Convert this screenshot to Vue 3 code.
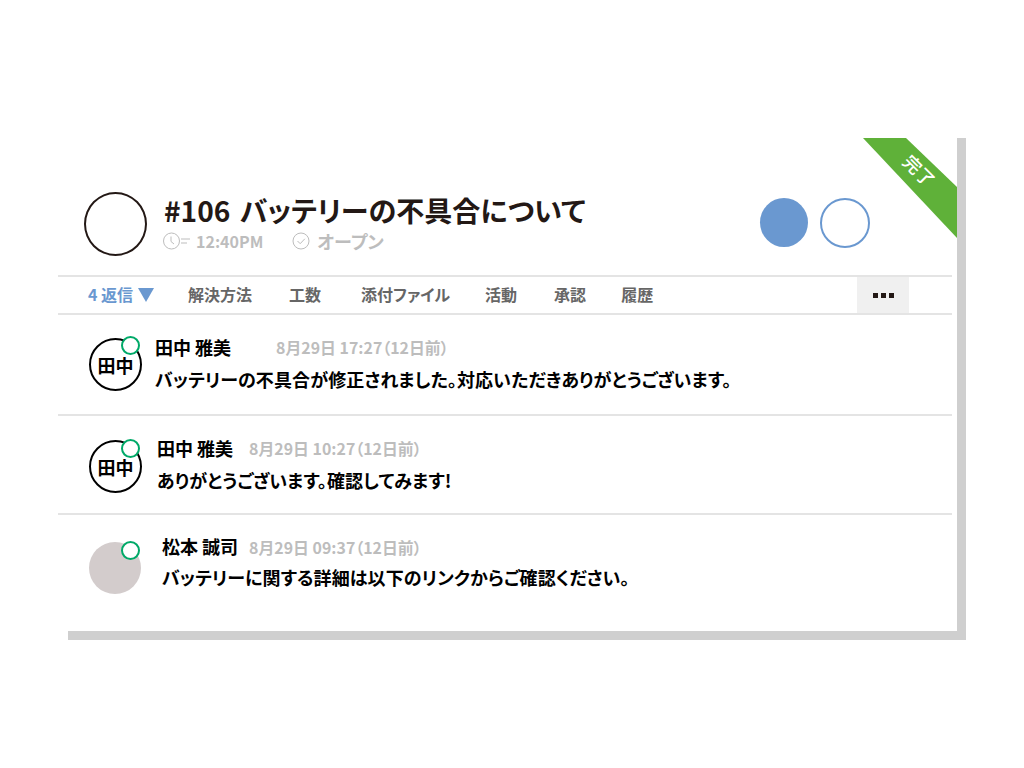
<script setup>
const tabs = [
  { label: '解決方法', cls: 'gap-32' },
  { label: '工数', cls: 'gap-37' },
  { label: '添付ファイル', cls: 'gap-40' },
  { label: '活動', cls: 'gap-35' },
  { label: '承認', cls: 'gap-37' },
  { label: '履歴', cls: 'gap-35' },
];

const replies = [
  {
    name: '田中 雅美',
    date: '8月29日 17:27（12日前）',
    text: 'バッテリーの不具合が修正されました。対応いただきありがとうございます。',
    avatar: '田中',
    cls: 'row-one',
  },
  {
    name: '田中 雅美',
    date: '8月29日 10:27（12日前）',
    text: 'ありがとうございます。確認してみます!',
    avatar: '田中',
    cls: 'row-two',
  },
  {
    name: '松本 誠司',
    date: '8月29日 09:37（12日前）',
    text: 'バッテリーに関する詳細は以下のリンクからご確認ください。',
    avatar: '',
    cls: 'row-three',
  },
];
</script>

<template>
  <div class="page">
    <div class="card">
      <div class="ribbon">
        <svg width="94" height="100" viewBox="0 0 94 100">
          <polygon points="0,0 43,0 94,49 94,100" fill="#5fb139" />
        </svg>
        <span class="ribbon-text">完了</span>
      </div>

      <div class="sheet">
        <header class="head">
          <div class="head-avatar"></div>
          <div class="head-main">
            <h1 class="title">#106 バッテリーの不具合について</h1>
            <div class="meta">
              <svg class="icon-clock" width="28" height="18" viewBox="0 0 28 18" fill="none" stroke="#bdbdbd">
                <circle cx="8.5" cy="9" r="8" />
                <path d="M8 4.5V9.5L11 12" />
                <path d="M18 7H27M18 11H24" />
              </svg>
              <span class="meta-time">12:40PM</span>
              <svg class="icon-check" width="18" height="18" viewBox="0 0 18 18" fill="none" stroke="#bdbdbd">
                <circle cx="9" cy="9" r="8" />
                <path d="M5.5 9L8.2 11.7L12.8 6.8" />
              </svg>
              <span class="meta-state">オープン</span>
            </div>
          </div>
          <div class="members">
            <span class="member filled"></span>
            <span class="member outlined"></span>
          </div>
        </header>

        <nav class="tabs">
          <span class="tab-active">4 返信<i class="caret"></i></span>
          <span v-for="tab in tabs" :key="tab.label" class="tab" :class="tab.cls">{{ tab.label }}</span>
          <div class="more"><i></i><i></i><i></i></div>
        </nav>

        <div v-for="item in replies" :key="item.date" class="row" :class="item.cls">
          <div class="avatar" :class="{ blank: !item.avatar }">
            {{ item.avatar }}
            <span class="status"></span>
          </div>
          <div class="body">
            <div class="line-top">
              <span class="name">{{ item.name }}</span>
              <span class="date">{{ item.date }}</span>
            </div>
            <p class="text">{{ item.text }}</p>
          </div>
        </div>
      </div>
    </div>
  </div>
</template>

<style>
html,
body {
  margin: 0;
  background: #fff;
}
</style>

<style scoped>
.page {
  width: 1024px;
  height: 768px;
  padding: 138px 0 0 68px;
  box-sizing: border-box;
  overflow: hidden;
  font-family: "Noto Sans CJK JP", "Noto Sans", sans-serif;
  font-feature-settings: "palt";
}

.card {
  position: relative;
  width: 898px;
  height: 502px;
  box-sizing: border-box;
  border-right: 9px solid #cfcfcf;
  border-bottom: 9px solid #cfcfcf;
  background: #fff;
}

.ribbon {
  position: absolute;
  top: 0;
  right: 0;
  width: 94px;
  height: 100px;
  z-index: 2;
}

.ribbon svg {
  display: block;
}

.ribbon-text {
  position: absolute;
  left: 34px;
  top: 20px;
  width: 46px;
  text-align: center;
  color: #fff;
  font-size: 18px;
  line-height: 24px;
  font-weight: 500;
  transform: rotate(45deg);
}

.sheet {
  width: 894px;
  margin-left: -10px;
}

.head {
  height: 137px;
  display: flex;
  align-items: flex-start;
  padding: 54px 82px 0 26px;
  box-sizing: border-box;
}

.head-avatar {
  width: 63px;
  height: 64px;
  box-sizing: border-box;
  border: 2px solid #231815;
  border-radius: 50%;
  flex: none;
}

.head-main {
  margin-left: 17px;
  flex: 1;
}

.title {
  margin: -1px 0 0;
  font-size: 28.1px;
  word-spacing: 3px;
  line-height: 38px;
  font-weight: 700;
  color: #231815;
}

.meta {
  display: flex;
  align-items: center;
  height: 24px;
  color: #bdbdbd;
  font-weight: 700;
  font-size: 16px;
}

.icon-clock {
  margin-left: -1px;
  flex: none;
}

.meta-time {
  margin-left: 5px;
}

.icon-check {
  margin-left: 29px;
  flex: none;
}

.meta-state {
  margin-left: 7px;
  font-size: 18px;
}

.members {
  display: flex;
  align-items: flex-start;
  gap: 12px;
  margin-top: 6px;
}

.member {
  display: block;
  width: 49px;
  height: 49px;
  box-sizing: border-box;
  border-radius: 50%;
}

.filled {
  width: 48px;
  background: #6a98d0;
}

.outlined {
  width: 50px;
  height: 50px;
  border: 2px solid #6a98d0;
}

.tabs {
  height: 36px;
  display: flex;
  align-items: center;
  border-top: 2px solid #e4e4e4;
  border-bottom: 2px solid #e4e4e4;
  padding-left: 30px;
  font-size: 16px;
  font-weight: 700;
  color: #666;
}

.tab-active {
  display: flex;
  align-items: center;
  color: #6a98d0;
  width: 68px;
  flex: none;
  margin-top: -2px;
}

.caret {
  width: 0;
  height: 0;
  margin-left: 5px;
  margin-top: 1px;
  border-left: 8.5px solid transparent;
  border-right: 8.5px solid transparent;
  border-top: 14px solid #6a98d0;
}

.tab {
  flex: none;
  margin-top: -2px;
}

.gap-32 {
  margin-left: 32px;
}

.gap-37 {
  margin-left: 37px;
}

.gap-40 {
  margin-left: 40px;
}

.gap-35 {
  margin-left: 35px;
}

.more {
  margin-left: auto;
  margin-right: 43px;
  width: 52px;
  height: 36px;
  display: flex;
  align-items: center;
  justify-content: center;
  gap: 3px;
  background: #f0f0f0;
}

.more i {
  display: block;
  width: 5px;
  height: 5px;
  background: #231815;
}

.row {
  display: flex;
  align-items: flex-start;
  box-sizing: border-box;
  border-bottom: 2px solid #e4e4e4;
  padding-left: 31px;
}

.row-one {
  height: 101px;
  padding-top: 23px;
}

.row-two {
  height: 99px;
  padding-top: 24px;
}

.row-three {
  height: 100px;
  border-bottom: 0;
  padding-top: 27px;
}

.avatar {
  position: relative;
  width: 53px;
  height: 53px;
  flex: none;
  box-sizing: border-box;
  border: 2px solid #000;
  border-radius: 50%;
  display: flex;
  align-items: center;
  justify-content: center;
  font-size: 18px;
  line-height: 1;
  font-weight: 700;
  color: #000;
}

.avatar.blank {
  width: 52px;
  height: 52px;
  border: 0;
  background: #d3cccc;
}

.status {
  position: absolute;
  top: -4px;
  right: 0;
  width: 19px;
  height: 19px;
  box-sizing: border-box;
  border: 2px solid #00a968;
  border-radius: 50%;
  background: #fff;
}

.row-two .status {
  top: -3px;
}

.avatar.blank .status {
  top: -1px;
  right: 1px;
}

.body {
  flex: 1;
  min-width: 0;
}

.row-one .body {
  margin-left: 13px;
  margin-top: -2px;
}

.row-two .body {
  margin-left: 15px;
  margin-top: -3px;
}

.row-three .body {
  margin-left: 21px;
  margin-top: -7px;
}

.line-top {
  display: flex;
  align-items: center;
  height: 22px;
}

.name {
  font-size: 18px;
  font-weight: 700;
  color: #000;
}

.date {
  font-size: 15.9px;
  font-weight: 700;
  color: #bdbdbd;
}

.row-one .date {
  margin-left: 45px;
}

.row-two .date {
  margin-left: 16px;
}

.row-three .date {
  margin-left: 11px;
  margin-top: 3px;
}

.text {
  margin: 9px 0 0;
  font-size: 18px;
  letter-spacing: 0.1px;
  line-height: 24px;
  font-weight: 700;
  color: #000;
}

.row-three .text {
  margin-top: 8px;
}
</style>
